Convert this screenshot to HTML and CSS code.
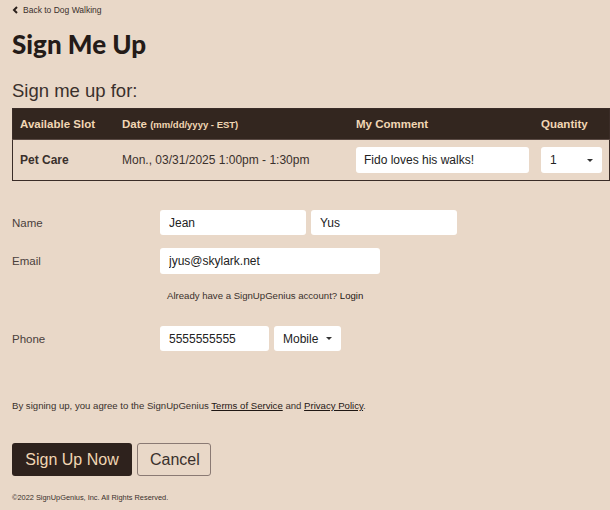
FILE: index.html
```html
<!DOCTYPE html>
<html lang="en">
<head>
    <meta charset="UTF-8">
    <title>Sign Me Up</title>
    <link rel="stylesheet" href="styles.css">
</head>
<body>
    <div class="page">
        <a class="back" href="#"><svg width="7" height="8" viewBox="0 0 7 8"><polyline points="5,1 2,4 5,7" fill="none" stroke="#2b211d" stroke-width="2"/></svg>Back to Dog Walking</a>
        <h1>Sign Me Up</h1>
        <h2>Sign me up for:</h2>

        <table class="slots">
            <thead>
                <tr>
                    <th class="c-slot">Available Slot</th>
                    <th class="c-date">Date <small>(mm/dd/yyyy - EST)</small></th>
                    <th class="c-comment">My Comment</th>
                    <th class="c-qty">Quantity</th>
                </tr>
            </thead>
            <tbody>
                <tr>
                    <td class="slot-name">Pet Care</td>
                    <td>Mon., 03/31/2025 1:00pm - 1:30pm</td>
                    <td><input class="field comment" type="text" value="Fido loves his walks!"></td>
                    <td><div class="field select qty">1<span class="caret"></span></div></td>
                </tr>
            </tbody>
        </table>

        <div class="row row-name">
            <label>Name</label>
            <input class="field name" type="text" value="Jean">
            <input class="field name" type="text" value="Yus">
        </div>
        <div class="row row-email">
            <label>Email</label>
            <input class="field email" type="text" value="jyus@skylark.net">
        </div>
        <p class="login">Already have a SignUpGenius account? <a href="#">Login</a></p>
        <div class="row row-phone">
            <label>Phone</label>
            <input class="field phone" type="text" value="5555555555">
            <div class="field select mobile">Mobile<span class="caret"></span></div>
        </div>

        <p class="terms">By signing up, you agree to the SignUpGenius <a href="#">Terms of Service</a> and <a href="#">Privacy Policy</a>.</p>

        <div class="actions">
            <button class="btn btn-primary">Sign Up Now</button>
            <button class="btn btn-cancel">Cancel</button>
        </div>

        <p class="copy">&copy;2022 SignUpGenius, Inc. All Rights Reserved.</p>
    </div>
</body>
</html>
```

FILE: styles.css
```css
body {
    margin: 0;
    background-color: #e9d8c8;
    color: #3a302c;
    font-family: "Liberation Sans", Arial, sans-serif;
}
.page {
    padding: 0 0 0 12px;
}
a {
    color: #1f1714;
    text-decoration: none;
}
.back {
    display: inline-flex;
    align-items: center;
    gap: 4px;
    margin-top: 3px;
    font-size: 8.5px;
    color: #3a302c;
    height: 12px;
}
h1 {
    font-family: Lato, "Liberation Sans", sans-serif;
    font-weight: 900;
    font-size: 26px;
    color: #241b18;
    margin: 11px 0 0;
    line-height: 30px;
}
h2 {
    font-weight: normal;
    font-size: 18.5px;
    margin: 21px 0 0;
    line-height: 22px;
    color: #3a302c;
}
.slots {
    width: 598px;
    margin-top: 6px;
    border-collapse: collapse;
    border: 1px solid #3a2c27;
    font-size: 12px;
}
.slots th {
    background-color: #33261f;
    color: #f1d6b4;
    font-size: 11.5px;
    text-align: left;
    height: 30px;
    padding: 0 0 0 7px;
    border-bottom: 1px solid #5a4a44;
}
.slots th small {
    font-size: 9.5px;
}
.c-slot { width: 95px; }
.c-date { width: 227px; }
.c-comment { width: 178px; }
.slots td {
    height: 40px;
    padding: 0 0 0 7px;
    color: #3a302c;
}
.slots .slot-name {
    font-weight: bold;
    font-size: 12px;
}
.field {
    box-sizing: border-box;
    height: 26px;
    border: none;
    border-radius: 3px;
    background-color: #fff;
    font-family: "Liberation Sans", Arial, sans-serif;
    font-size: 12px;
    color: #222;
    padding: 0 9px;
    outline: none;
}
.comment {
    width: 173px;
    padding: 0 8px;
}
.select {
    display: flex;
    align-items: center;
    justify-content: space-between;
}
.qty {
    width: 61px;
}
.caret {
    width: 0;
    height: 0;
    border-left: 3px solid transparent;
    border-right: 3px solid transparent;
    border-top: 3px solid #333;
}
.row {
    display: flex;
    align-items: center;
    gap: 5px;
}
.row label {
    width: 143px;
    font-size: 11.5px;
    color: #4a403c;
}
.row-name {
    margin-top: 29px;
}
.name {
    width: 146px;
    height: 25px;
}
.row-email {
    margin-top: 13px;
}
.email {
    width: 220px;
}
.login {
    margin: 16px 0 0 155px;
    font-size: 9.6px;
    color: #3a302c;
}
.row-phone {
    margin-top: 25px;
}
.phone {
    width: 109px;
    height: 25px;
}
.mobile {
    width: 67px;
    height: 25px;
    font-size: 12px;
}
.terms {
    margin: 49px 0 0;
    font-size: 9.6px;
    color: #3a302c;
}
.terms a {
    text-decoration: underline;
}
.actions {
    display: flex;
    gap: 5px;
    margin-top: 32px;
}
.btn {
    height: 33px;
    border-radius: 3px;
    font-family: "Liberation Sans", Arial, sans-serif;
    font-size: 16px;
    padding: 0 12px;
    cursor: pointer;
}
.btn-primary {
    width: 120px;
    background-color: #2e221d;
    color: #f1d6b4;
    border: none;
}
.btn-cancel {
    width: 74px;
    background-color: transparent;
    border: 1px solid #8a7a74;
    color: #3a302c;
}
.copy {
    margin: 17px 0 0;
    font-size: 7.4px;
    color: #3a302c;
}
```
